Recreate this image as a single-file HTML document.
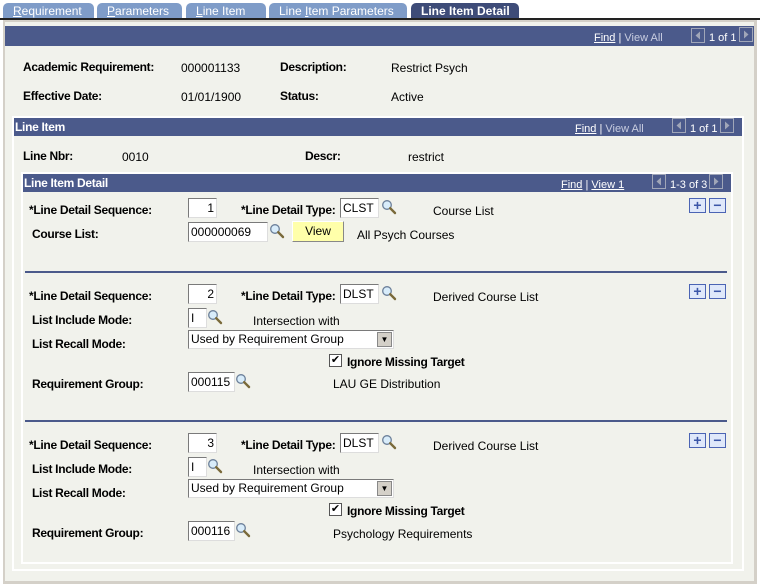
<!DOCTYPE html>
<html><head><meta charset="utf-8"><style>
*{margin:0;padding:0;box-sizing:border-box}
body{width:760px;height:588px;background:#fff;font-family:"Liberation Sans",Arial,sans-serif;font-size:12px;color:#000;position:relative;overflow:hidden}
.a{position:absolute;white-space:nowrap}
.b{font-weight:bold;letter-spacing:-0.3px}
.tab{position:absolute;top:3px;height:16px;background:#7f9cc8;color:#fff;font-size:12px;padding-left:10px;line-height:16px;border-radius:5px 5px 0 0}
.tab.act{background:#3e4c78;font-weight:bold}
.bar{position:absolute;background:#4b5a8b;color:#fff}
.wl{color:#fff;font-size:11px}
.in{position:absolute;height:20px;background:#fff;border:1px solid #7a7a7a;border-right-color:#ddd;border-bottom-color:#ddd;font-size:12px;line-height:18px;padding:0 2px}
.nav{position:absolute;width:14px;height:15px}
.pm{position:absolute;width:17px;height:15px;border:1px solid #4b64b4;background:#dfe8fa;color:#3b56a8;font-weight:bold;font-size:14px;line-height:12px;text-align:center}
.mg{position:absolute;width:16px;height:16px}
</style></head><body>
<svg width="0" height="0" style="position:absolute"><defs>
<symbol id="m" viewBox="0 0 16 16"><circle cx="6" cy="6" r="4.3" fill="#d8ecfa" stroke="#6b7f99" stroke-width="1.3"/><path d="M9.2 9.2 L14 14" stroke="#7a6a3a" stroke-width="2.4" stroke-linecap="round"/></symbol>
<symbol id="l" viewBox="0 0 14 15"><rect x="0.5" y="0.5" width="13" height="14" fill="none" stroke="#a0a6b8"/><path d="M9 3.5 L4.5 7.5 L9 11.5Z" fill="#a0a6b8"/></symbol>
<symbol id="r" viewBox="0 0 14 15"><rect x="0.5" y="0.5" width="13" height="14" fill="none" stroke="#a0a6b8"/><path d="M5 3.5 L9.5 7.5 L5 11.5Z" fill="#a0a6b8"/></symbol>
</defs></svg>
<div class="tab" style="left:3px;width:91px"><u>R</u>equirement</div>
<div class="tab" style="left:97px;width:85px"><u>P</u>arameters</div>
<div class="tab" style="left:186px;width:80px"><u>L</u>ine Item</div>
<div class="tab" style="left:269px;width:138px">Line <u>I</u>tem Parameters</div>
<div class="tab act" style="left:411px;width:108px">Line Item Detail</div>
<div class="a" style="left:0;top:18px;width:760px;height:2px;background:#222"></div>
<div class="a" style="left:3px;top:20px;width:754px;height:564px;background:#d4d0c8"></div>
<div class="a" style="left:5px;top:22px;width:749px;height:559px;background:#f1f2ec"></div>
<div class="bar" style="left:5px;top:26px;width:749px;height:20px"></div>
<div class="a wl" style="left:594px;top:32px"><u>Find</u> | <span style="color:#c8cde0">View All</span></div>
<svg class="nav" style="left:691px;top:28px"><use href="#l"/></svg><div class="a wl" style="left:709px;top:32px">1 of 1</div><svg class="nav" style="left:739px;top:27px"><use href="#r"/></svg>
<div class="a b" style="left:23px;top:60px">Academic Requirement:</div><div class="a" style="left:181px;top:61px">000001133</div>
<div class="a b" style="left:280px;top:60px">Description:</div><div class="a" style="left:391px;top:61px">Restrict Psych</div>
<div class="a b" style="left:23px;top:89px">Effective Date:</div><div class="a" style="left:181px;top:90px">01/01/1900</div>
<div class="a b" style="left:280px;top:89px">Status:</div><div class="a" style="left:391px;top:90px">Active</div>
<div class="a" style="left:12px;top:116px;width:732px;height:455px;border:2px solid #fff"></div>
<div class="bar" style="left:14px;top:118px;width:728px;height:18px"></div>
<div class="a b" style="left:15px;top:120px;color:#fff">Line Item</div>
<div class="a wl" style="left:575px;top:123px"><u>Find</u> | <span style="color:#c8cde0">View All</span></div>
<svg class="nav" style="left:672px;top:118px"><use href="#l"/></svg><div class="a wl" style="left:690px;top:123px">1 of 1</div><svg class="nav" style="left:720px;top:118px"><use href="#r"/></svg>
<div class="a b" style="left:23px;top:149px">Line Nbr:</div><div class="a" style="left:122px;top:150px">0010</div>
<div class="a b" style="left:305px;top:149px">Descr:</div><div class="a" style="left:408px;top:150px">restrict</div>
<div class="a" style="left:21px;top:172px;width:712px;height:392px;border:2px solid #fff"></div>
<div class="bar" style="left:23px;top:174px;width:708px;height:18px"></div>
<div class="a b" style="left:24px;top:176px;color:#fff">Line Item Detail</div>
<div class="a wl" style="left:561px;top:179px"><u>Find</u> | <u>View 1</u></div>
<svg class="nav" style="left:652px;top:174px"><use href="#l"/></svg><div class="a wl" style="left:670px;top:179px">1-3 of 3</div><svg class="nav" style="left:709px;top:174px"><use href="#r"/></svg>

<div class="pm" style="left:689px;top:198px">+</div><div class="pm" style="left:709px;top:198px">−</div>
<div class="a b" style="left:29px;top:203px">*Line Detail Sequence:</div>
<div class="in" style="left:188px;top:198px;width:29px;text-align:right">1</div>
<div class="a b" style="left:241px;top:203px">*Line Detail Type:</div>
<div class="in" style="left:340px;top:198px;width:39px">CLST</div>
<svg class="mg" style="left:381px;top:199px"><use href="#m"/></svg>
<div class="a" style="left:433px;top:204px">Course List</div>
<div class="a b" style="left:32px;top:227px">Course List:</div>
<div class="in" style="left:188px;top:222px;width:80px">000000069</div>
<svg class="mg" style="left:269px;top:223px"><use href="#m"/></svg>
<div class="a" style="left:292px;top:221px;width:52px;height:21px;background:#ffffaa;border:1px solid #888;border-top-color:#fff;border-left-color:#fff;text-align:center;line-height:19px">View</div>
<div class="a" style="left:357px;top:228px">All Psych Courses</div>
<div class="a" style="left:25px;top:271px;width:702px;height:2px;background:#4b5a8b"></div>

<div class="pm" style="left:689px;top:284px">+</div><div class="pm" style="left:709px;top:284px">−</div>
<div class="a b" style="left:29px;top:289px">*Line Detail Sequence:</div>
<div class="in" style="left:188px;top:284px;width:29px;text-align:right">2</div>
<div class="a b" style="left:241px;top:289px">*Line Detail Type:</div>
<div class="in" style="left:340px;top:284px;width:39px">DLST</div>
<svg class="mg" style="left:381px;top:285px"><use href="#m"/></svg>
<div class="a" style="left:433px;top:290px">Derived Course List</div>
<div class="a b" style="left:32px;top:313px">List Include Mode:</div>
<div class="in" style="left:188px;top:308px;width:19px">I</div>
<svg class="mg" style="left:207px;top:309px"><use href="#m"/></svg>
<div class="a" style="left:253px;top:314px">Intersection with</div>
<div class="a b" style="left:32px;top:337px">List Recall Mode:</div>
<div class="in" style="left:188px;top:330px;width:206px;height:19px;line-height:17px">Used by Requirement Group<span style="position:absolute;right:1px;top:1px;width:15px;height:15px;background:#d4d0c8;border:1px solid #888;font-size:8px;text-align:center;line-height:14px">▼</span></div>
<div class="a" style="left:329px;top:354px;width:13px;height:13px;border:1px solid #555;background:#fff;font-size:11px;line-height:11px;text-align:center">✔</div>
<div class="a b" style="left:347px;top:355px">Ignore Missing Target</div>
<div class="a b" style="left:32px;top:377px">Requirement Group:</div>
<div class="in" style="left:188px;top:372px;width:47px">000115</div>
<svg class="mg" style="left:235px;top:373px"><use href="#m"/></svg>
<div class="a" style="left:333px;top:377px">LAU GE Distribution</div>
<div class="a" style="left:25px;top:420px;width:702px;height:2px;background:#4b5a8b"></div>

<div class="pm" style="left:689px;top:433px">+</div><div class="pm" style="left:709px;top:433px">−</div>
<div class="a b" style="left:29px;top:438px">*Line Detail Sequence:</div>
<div class="in" style="left:188px;top:433px;width:29px;text-align:right">3</div>
<div class="a b" style="left:241px;top:438px">*Line Detail Type:</div>
<div class="in" style="left:340px;top:433px;width:39px">DLST</div>
<svg class="mg" style="left:381px;top:434px"><use href="#m"/></svg>
<div class="a" style="left:433px;top:439px">Derived Course List</div>
<div class="a b" style="left:32px;top:462px">List Include Mode:</div>
<div class="in" style="left:188px;top:457px;width:19px">I</div>
<svg class="mg" style="left:207px;top:458px"><use href="#m"/></svg>
<div class="a" style="left:253px;top:463px">Intersection with</div>
<div class="a b" style="left:32px;top:486px">List Recall Mode:</div>
<div class="in" style="left:188px;top:479px;width:206px;height:19px;line-height:17px">Used by Requirement Group<span style="position:absolute;right:1px;top:1px;width:15px;height:15px;background:#d4d0c8;border:1px solid #888;font-size:8px;text-align:center;line-height:14px">▼</span></div>
<div class="a" style="left:329px;top:503px;width:13px;height:13px;border:1px solid #555;background:#fff;font-size:11px;line-height:11px;text-align:center">✔</div>
<div class="a b" style="left:347px;top:504px">Ignore Missing Target</div>
<div class="a b" style="left:32px;top:526px">Requirement Group:</div>
<div class="in" style="left:188px;top:521px;width:47px">000116</div>
<svg class="mg" style="left:235px;top:522px"><use href="#m"/></svg>
<div class="a" style="left:333px;top:527px">Psychology Requirements</div>
</body></html>
